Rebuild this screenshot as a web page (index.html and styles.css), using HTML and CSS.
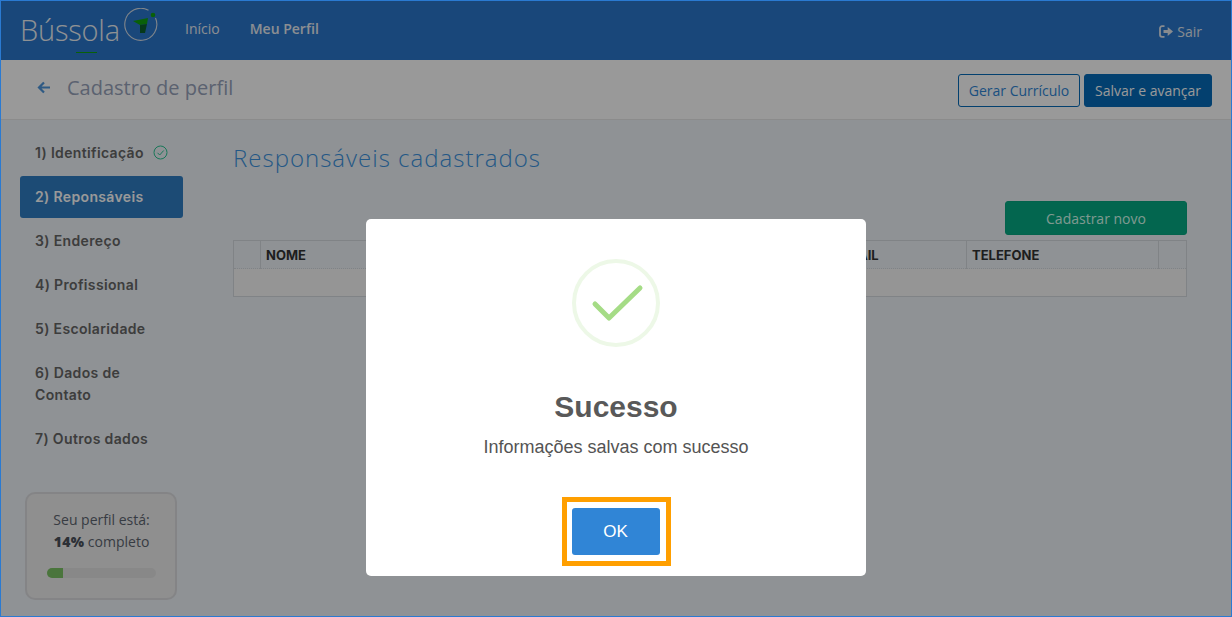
FILE: index.html
```html
<!DOCTYPE html>
<html lang="pt-BR">
<head>
<meta charset="utf-8">
<title>Bússola</title>
<link rel="stylesheet" href="styles.css">
</head>
<body>
<header class="topbar">
  <a class="brand">
    <span class="brand-name">Bússola</span>
    <svg class="brand-mark" width="34" height="34" viewBox="0 0 34 34">
      <path d="M24.500 2.300A16 16 0 1 0 31.500 10" fill="none" stroke="#d5dde6" stroke-width="1.100"/>
      <circle cx="29" cy="7" r="2.300" fill="#0fa00f"/>
      <path d="M9 13 24 10 23 16 16 17Z" fill="#0fa00f"/>
      <path d="M16 17 23 16 21 25 16 25Z" fill="#0a5f2c"/>
    </svg>
    <span class="brand-line"></span>
  </a>
  <nav class="topnav">
    <a class="topnav-link">Início</a>
    <a class="topnav-link topnav-current">Meu Perfil</a>
  </nav>
  <a class="logout">
    <svg width="15" height="13" viewBox="0 0 15 13"><path d="M5.500 1.200H3A2 2 0 0 0 1 3.200v6.600a2 2 0 0 0 2 2h2.500" fill="none" stroke="currentColor" stroke-width="1.800"/><path d="M4.500 5h4.200V2L14 6.500 8.700 11V8H4.500Z" fill="currentColor"/></svg>
    Sair
  </a>
</header>

<section class="subbar">
  <svg class="back" width="14" height="13" viewBox="0 0 14 13"><path d="M13 6.500H2.500M7 1.500 2 6.500l5 5" fill="none" stroke="currentColor" stroke-width="2.200"/></svg>
  <h1 class="subbar-title">Cadastro de perfil</h1>
  <div class="actions">
    <button class="btn btn-outline">Gerar Currículo</button>
    <button class="btn btn-solid">Salvar e avançar</button>
  </div>
</section>

<div class="content">
  <aside class="sidebar">
    <ul class="steps">
      <li class="step">1) Identificação
        <svg class="step-check" width="15" height="15" viewBox="0 0 15 15"><circle cx="7.500" cy="7.500" r="6.500" fill="none" stroke="currentColor"/><path d="M4.500 7.800 6.700 10l4-4.500" fill="none" stroke="currentColor"/></svg>
      </li>
      <li class="step step-active">2) Reponsáveis</li>
      <li class="step">3) Endereço</li>
      <li class="step">4) Profissional</li>
      <li class="step">5) Escolaridade</li>
      <li class="step">6) Dados de Contato</li>
      <li class="step">7) Outros dados</li>
    </ul>
    <div class="progress-card">
      <p class="progress-text">Seu perfil está:<br><b>14%</b> completo</p>
      <div class="progress-track"><div class="progress-fill" style="width:14.500%"></div></div>
    </div>
  </aside>

  <main class="main">
    <h2 class="main-title">Responsáveis cadastrados</h2>
    <div class="toolbar"><button class="btn-new">Cadastrar novo</button></div>
    <table class="grid">
      <colgroup>
        <col class="col-check"><col class="col-name"><col class="col-mail"><col class="col-phone"><col class="col-end">
      </colgroup>
      <thead>
        <tr><th></th><th>NOME</th><th>EMAIL</th><th>TELEFONE</th><th></th></tr>
      </thead>
      <tbody>
        <tr class="empty-row"><td colspan="5"></td></tr>
      </tbody>
    </table>
  </main>
</div>

<div class="overlay"></div>
<div class="modal">
  <svg class="modal-icon" width="88" height="88" viewBox="0 0 88 88">
    <circle cx="44" cy="44" r="42" fill="none" stroke="#edf8e7" stroke-width="4"/>
    <path d="M23 45 37 59 68 29" fill="none" stroke="#a5dc86" stroke-width="5" stroke-linecap="round" stroke-linejoin="round"/>
  </svg>
  <h2 class="modal-title">Sucesso</h2>
  <p class="modal-text">Informações salvas com sucesso</p>
  <div class="ok-focus"><button class="modal-ok">OK</button></div>
</div>
</body>
</html>
```
FILE: styles.css
```css
* { box-sizing: border-box; }
html, body { margin: 0; padding: 0; }
body {
  position: relative;
  width: 1232px;
  height: 617px;
  overflow: hidden;
  border: 1px solid #2a7ad2;
  background: #eef3f8;
  font-family: "Open Sans", sans-serif;
  font-size: 14px;
  display: flex;
  flex-direction: column;
}

.topbar {
  height: 59px;
  flex: none;
  display: flex;
  align-items: center;
  background: #2a77cc;
  color: #fff;
  padding-left: 20px;
}
.brand { position: relative; display: flex; width: 164px; height: 59px; }
.brand-name {
  font-family: "Open Sans", sans-serif;
  font-weight: 300;
  font-size: 29px;
  line-height: 30px;
  margin: 14px 0 0 -1px;
  letter-spacing: -0.2px;
  color: #eef2f6;
}
.brand-mark { position: absolute; left: 103px; top: 7px; }
.brand-line { position: absolute; left: 55px; top: 51px; width: 21px; height: 1px; background: #0fa00f; }
.topnav { display: flex; gap: 30px; margin-top: -5px; }
.topnav-link { color: #e8edf3; }
.topnav-current { font-weight: 600; }
.logout {
  margin-left: auto;
  margin-right: 29px;
  margin-top: 2px;
  display: flex;
  align-items: center;
  gap: 3px;
  color: #e2e8ef;
}

.subbar {
  height: 60px;
  flex: none;
  display: flex;
  align-items: center;
  background: #fff;
  border-bottom: 1px solid #e8e8e8;
  padding: 0 19px 0 36px;
}
.back { color: #4f97dc; margin-top: -4px; }
.subbar-title {
  margin: -4px 0 0 16px;
  font-size: 20px;
  font-weight: 400;
  color: #98a3bb;
}
.actions { margin-left: auto; display: flex; gap: 4px; margin-top: 2px; }
.btn {
  height: 33px;
  font: 14px "Open Sans", sans-serif;
  border-radius: 3px;
  border: 1px solid #056bb9;
  padding: 0;
}
.btn-outline { width: 122px; background: #fff; color: #2f86d6; }
.btn-solid { width: 128px; background: #056bb9; color: #fff; }

.content { flex: 1; display: flex; min-height: 0; }
.sidebar {
  width: 202px;
  flex: none;
  display: flex;
  flex-direction: column;
  padding: 11px 0 16px;
}
.steps { list-style: none; margin: 0; padding: 0 0 0 19px; width: 182px; }
.step {
  margin: 1px 0 2px;
  padding: 10px 15px;
  font-family: Inter, sans-serif;
  font-weight: 600;
  font-size: 14px;
  line-height: 22px;
  letter-spacing: 0.35px;
  color: #666;
  border-radius: 3px;
}
.step-active { background: #2f7dc3; color: #fff; }
.step-check { color: #2bc795; margin-left: 5px; vertical-align: -2px; }

.progress-card {
  margin: auto 0 0 24px;
  width: 152px;
  height: 108px;
  border: 2px solid #dcdde0;
  border-radius: 10px;
  background: #eeeeee;
  padding: 15px 19px 0 20px;
}
.progress-text { margin: 0 -5px; text-align: center; line-height: 22px; color: #5d6570; }
.progress-text b { color: #4a505a; font-weight: 800; letter-spacing: 0.3px; }
.progress-track { height: 10px; margin: 15px 0 0; background: #e3e3e3; border-radius: 5px; overflow: hidden; }
.progress-fill { height: 100%; background: #7cc464; }

.main { flex: 1; min-width: 0; padding: 0 44px 0 30px; }
.main-title {
  margin: 21px 0 0;
  font-size: 24px;
  font-weight: 300;
  line-height: 34px;
  letter-spacing: 1px;
  color: #3d93e0;
}
.toolbar { display: flex; justify-content: flex-end; margin-top: 26px; }
.btn-new {
  width: 182px;
  height: 34px;
  border: 1px solid #05a67f;
  border-radius: 3px;
  background: #05ab84;
  color: #d6fff0;
  font: 14px "Open Sans", sans-serif;
}
.grid {
  width: 953px;
  margin-top: 5px;
  table-layout: fixed;
  border-collapse: collapse;
  border: 1px solid #d6dadf;
}
.col-check { width: 27px; }
.col-name { width: 300px; }
.col-mail { width: 406px; }
.col-phone { width: 192px; }
.col-end { width: 28px; }
.grid th {
  height: 28px;
  padding: 0 5px;
  text-align: left;
  font-family: Inter, sans-serif;
  font-size: 13px;
  font-weight: 700;
  color: #333;
  border-right: 1px solid #d6dadf;
  border-bottom: 1px dotted #d6dadf;
}
.grid th:nth-child(3) { padding-left: 277px; white-space: nowrap; }
.empty-row td { height: 28px; background: #f8f8f8; padding: 0; }

.overlay { position: absolute; inset: 0; background: rgba(0, 0, 0, 0.4); }
.modal {
  position: absolute;
  left: 365px;
  top: 218px;
  width: 500px;
  height: 357px;
  background: #fff;
  border-radius: 5px;
  display: flex;
  flex-direction: column;
  align-items: center;
  font-family: "Liberation Sans", Arial, sans-serif;
  padding-top: 40px;
}
.modal-title { margin: 24px 0 0; font-size: 30px; line-height: 72px; height: 72px; font-weight: 700; color: #595959; }
.modal-text { margin: -8px 0 0; font-size: 18px; line-height: 24px; color: #545454; }
.ok-focus {
  margin-top: 38px;
  border: 5px solid #ff9f00;
  padding: 6px 6px 6px 5px;
  display: flex;
}
.modal-ok {
  width: 88px;
  height: 47px;
  border: 0;
  border-radius: 3px;
  background: #3085d6;
  color: #fff;
  font: 17px "Liberation Sans", Arial, sans-serif;
}
```
